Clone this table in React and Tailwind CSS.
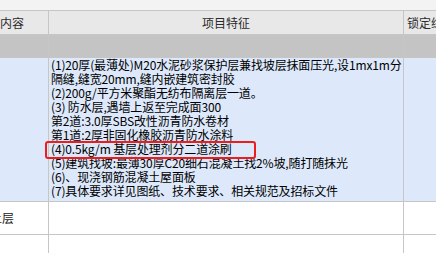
const font = { fontFamily: '"Noto Sans CJK SC", "Noto Sans", sans-serif' };

const lines = [
  "(1)20厚(最薄处)M20水泥砂浆保护层兼找坡层抹面压光,设1mx1m分",
  "隔缝,缝宽20mm,缝内嵌建筑密封胶",
  "(2)200g/平方米聚酯无纺布隔离层一道。",
  "(3) 防水层,遇墙上返至完成面300",
  "第2道:3.0厚SBS改性沥青防水卷材",
  "第1道:2厚非固化橡胶沥青防水涂料",
  "(4)0.5kg/m 基层处理剂分二道涂刷",
  "(5)建筑找坡:最薄30厚C20细石混凝土找2%坡,随打随抹光",
  "(6)、现浇钢筋混凝土屋面板",
  "(7)具体要求详见图纸、技术要求、相关规范及招标文件",
];

const Row = ({ className, first, second, third }) => (
  <div className={`flex border-b border-[#c6c6c6] ${className}`}>
    <div className="w-[49px] shrink-0 overflow-hidden border-r border-[#c6c6c6]">
      {first}
    </div>
    <div className="w-[355px] shrink-0 border-r border-[#c6c6c6]">{second}</div>
    <div className="flex-1 overflow-hidden">{third}</div>
  </div>
);

export default function App() {
  return (
    <div
      className="relative w-[436px] h-[253px] overflow-hidden bg-white text-[12px] text-[#1a1a1a]"
      style={font}
    >
      <div className="h-[11px] bg-[#f3f3f3] border-b border-[#c6c6c6]" />

      <Row
        className="h-[24px] bg-[#e8e8e8] text-[#2a2a2a]"
        first={<div className="h-full flex items-center whitespace-nowrap">内容</div>}
        second={<div className="h-full flex items-center justify-center">项目特征</div>}
        third={
          <div className="h-full flex items-center pl-[3px] whitespace-nowrap">
            锁定综合单价
          </div>
        }
      />

      <Row className="h-[23px] bg-[#c4c4c4]" />

      <Row
        className="h-[144px] bg-[#dde9fb]"
        second={
          <div className="pl-[2px] leading-[14px] tracking-[-0.15px] text-black">
            {lines.map((l) => (
              <div key={l} className="whitespace-nowrap">
                {l}
              </div>
            ))}
          </div>
        }
      />

      <Row
        className="h-[33px]"
        first={
          <div className="h-full flex items-center whitespace-nowrap -ml-[10px]">
            土层
          </div>
        }
      />

      <Row className="h-[30px]" />

      <div className="absolute left-[45px] top-[141px] w-[211px] h-[18px] border-2 border-[#ee1c1c] rounded-[3px]" />
    </div>
  );
}
